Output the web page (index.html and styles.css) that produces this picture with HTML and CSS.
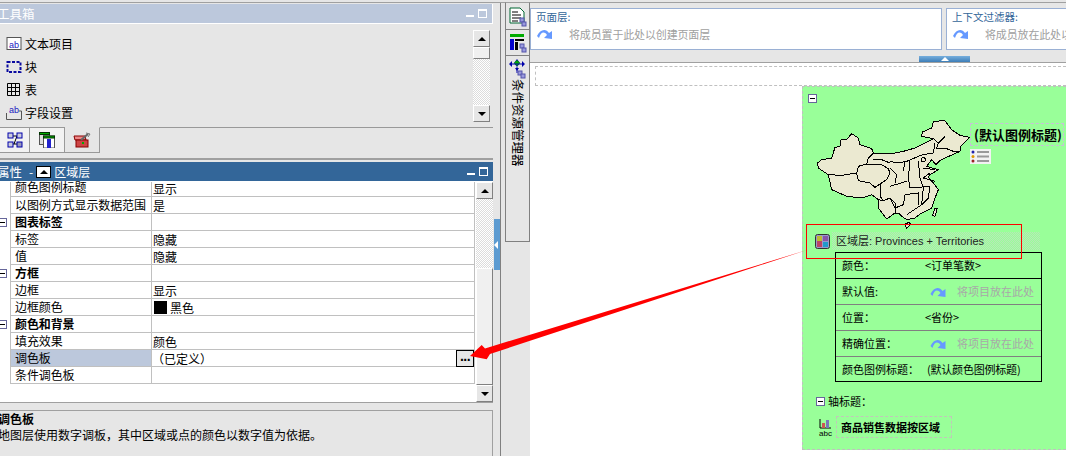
FILE: index.html
```html
<!DOCTYPE html>
<html lang="zh-CN">
<head>
  <meta charset="UTF-8" />
  <title>地图属性</title>
  <link rel="stylesheet" href="styles.css">
</head>
<body>
  <div class="app">

    <div class="left-col">
      <div class="title-bar light">
        <span class="title-text">工具箱</span>
        <span class="win-btns"><i class="btn-min"></i><i class="btn-max"></i></span>
      </div>
      <div class="toolbox">
        <ul class="tool-list">
          <li><svg class="tool-icon" viewBox="0 0 16 16"><rect x="1" y="1.5" width="14" height="12" fill="#fff" stroke="#555"/><text x="8" y="11.5" class="icon-text">ab</text></svg>文本项目</li>
          <li><svg class="tool-icon" viewBox="0 0 16 16"><rect x="1.5" y="3" width="13" height="10" fill="none" stroke="#0a0aa0" stroke-width="2" stroke-dasharray="3 1.5"/></svg>块</li>
          <li><svg class="tool-icon" viewBox="0 0 16 16"><path d="M1.500 1.500h12v12h-12zM1.500 5.500h12M1.500 9.500h12M5.500 1.500v12M9.500 1.500v12" fill="none" stroke="#000"/></svg>表</li>
          <li><svg class="tool-icon" viewBox="0 0 16 16"><path d="M.5 8v6.500h15V6H13" fill="none" stroke="#555"/><text x="8" y="8" class="icon-text">ab</text></svg>字段设置</li>
        </ul>
        <div class="scrollbar tool-scroll">
          <span class="sb-btn"><i class="tri-up"></i></span>
          <span class="sb-thumb small"></span>
          <span class="sb-track"></span>
          <span class="sb-btn"><i class="tri-down"></i></span>
        </div>
      </div>
      <div class="tabs">
        <span class="tab">
          <svg viewBox="0 0 16 16" width="16" height="16"><path d="M5 4h5M5 12h5M10 4l-3 8" stroke="#000" fill="none"/><rect x="1" y="1" width="5" height="5" fill="#ccd" stroke="#00a"/><rect x="10" y="1" width="5" height="5" fill="#ccd" stroke="#00a"/><rect x="1" y="10" width="5" height="5" fill="#ccd" stroke="#00a"/><rect x="10" y="10" width="5" height="5" fill="#99b" stroke="#00a"/></svg>
        </span>
        <span class="tab">
          <svg viewBox="0 0 16 16" width="16" height="16"><rect x=".5" y=".5" width="10" height="12" fill="#ddd" stroke="#555"/><rect x=".5" y=".5" width="10" height="2" fill="#0a0" stroke="#030"/><rect x="4.500" y="4" width="11" height="12" fill="#fff" stroke="#555"/><rect x="4.500" y="4" width="11" height="2" fill="#0a0" stroke="#030"/><rect x="8" y="7" width="4" height="9" fill="#22c"/></svg>
        </span>
        <span class="tab current">
          <svg viewBox="0 0 18 16" width="18" height="16"><path d="M1 4h11l1 4H2z" fill="#e88" stroke="#800"/><rect x="3" y="8" width="12" height="7" fill="#c44" stroke="#800"/><rect x="9" y="10" width="2" height="2" fill="#0a0"/><path d="M8 8l7-6" stroke="#666" stroke-width="2"/><path d="M13 1l4 1-2 3" fill="none" stroke="#777"/></svg>
        </span>
      </div>
      <div class="title-bar dark">
        <span class="title-text">属性</span>
        <span class="crumb-dash">-</span>
        <span class="crumb-icon"><i class="tri-up"></i></span>
        <span class="crumb-name">区域层</span>
        <span class="win-btns"><i class="btn-min"></i><i class="btn-max"></i></span>
      </div>
      <div class="props">
        <div class="prop-table">
          <div class="prop-row first"><span class="key">颜色图例标题</span><span class="val">显示</span></div>
          <div class="prop-row"><span class="key">以图例方式显示数据范围</span><span class="val">是</span></div>
          <div class="prop-row group"><i class="fold"></i><span class="key">图表标签</span><span class="val"></span></div>
          <div class="prop-row"><span class="key">标签</span><span class="val">隐藏</span></div>
          <div class="prop-row"><span class="key">值</span><span class="val">隐藏</span></div>
          <div class="prop-row group"><i class="fold"></i><span class="key">方框</span><span class="val"></span></div>
          <div class="prop-row"><span class="key">边框</span><span class="val">显示</span></div>
          <div class="prop-row"><span class="key">边框颜色</span><span class="val"><i class="swatch"></i>黑色</span></div>
          <div class="prop-row group"><i class="fold"></i><span class="key">颜色和背景</span><span class="val"></span></div>
          <div class="prop-row"><span class="key">填充效果</span><span class="val">颜色</span></div>
          <div class="prop-row selected"><span class="key">调色板</span><span class="val defined">（已定义）<b class="more">...</b></span></div>
          <div class="prop-row"><span class="key">条件调色板</span><span class="val"></span></div>
        </div>
        <div class="scrollbar prop-scroll">
          <span class="sb-btn"><i class="tri-up"></i></span>
          <span class="sb-track"></span>
          <span class="sb-thumb"></span>
          <span class="sb-btn"><i class="tri-down"></i></span>
        </div>
      </div>
      <div class="help">
        <strong>调色板</strong>
        <p>地图层使用数字调板，其中区域或点的颜色以数字值为依据。</p>
      </div>
    </div>

    <div class="splitter"><span class="split-handle"><i class="tri-left"></i></span></div>

    <div class="strip">
      <span class="strip-tab">
        <svg viewBox="0 0 18 20" width="18" height="20"><path d="M1 1h10l4 4v11H1z" fill="#fff" stroke="#063"/><path d="M3 5h6M3 8h9M3 11h9M3 14h6" stroke="#000"/><rect x="11" y="11" width="4" height="4" fill="#99d" stroke="#55a"/><rect x="13" y="15" width="4" height="4" fill="#99d" stroke="#55a"/></svg>
      </span>
      <span class="strip-tab">
        <svg viewBox="0 0 18 20" width="18" height="20"><rect x="1" y="1" width="14" height="3" fill="#0a0"/><rect x="1" y="6" width="4" height="11" fill="#00c"/><rect x="6" y="6" width="9" height="2" fill="#000"/><rect x="6" y="9" width="3" height="8" fill="#000"/><rect x="11" y="11" width="4" height="4" fill="#99d" stroke="#55a"/><rect x="13" y="15" width="4" height="4" fill="#99d" stroke="#55a"/></svg>
      </span>
      <span class="strip-tab long">
        <svg viewBox="0 0 18 20" width="18" height="20"><path d="M0 5l3-3v6zM16 5l-3-3v6zM8 12l-2-3h4zM8 0l3 4-3 4-3-4z" fill="#00a"/><path d="M5 4l3-3 3 3-3 3z" fill="#0a0"/><path d="M3 5h10M8 8v6" stroke="#00a"/><rect x="9" y="12" width="4" height="4" fill="#99d" stroke="#55a"/><rect x="12" y="15" width="4" height="4" fill="#99d" stroke="#55a"/></svg>
        <span class="strip-label">条件资源管理器</span>
      </span>
    </div>

    <div class="main">
      <div class="drop-row">
        <div class="drop-zone page-zone">
          <span class="zone-label">页面层:</span>
          <div class="zone-hint"><svg class="hint-arrow" viewBox="0 0 16 12"><path d="M0 8C3 1 9 0 12 5l3-2v8L7 10l3-3C7 3 4 4 2 10z" fill="#6699ff"/></svg>将成员置于此处以创建页面层</div>
        </div>
        <div class="drop-zone filter-zone">
          <span class="zone-label">上下文过滤器:</span>
          <div class="zone-hint"><svg class="hint-arrow" viewBox="0 0 16 12"><path d="M0 8C3 1 9 0 12 5l3-2v8L7 10l3-3C7 3 4 4 2 10z" fill="#6699ff"/></svg>将成员放在此处以创建上下文过滤器</div>
        </div>
      </div>
      <div class="collapse-row"><span class="collapse-btn"><i class="tri-up white"></i></span></div>
      <div class="canvas">
        <div class="dashed-strip"></div>
        <div class="map-area">
          <div class="map-panel">
            <i class="fold panel-fold"></i>
            <div class="map-row">
              <svg class="china" viewBox="0 0 465 336">
                <path class="land" d="M8 135L20 125 50 120 60 88 75 85 78 65 95 65 110 47 130 60 135 80 170 92 175 105 205 105 225 108 265 100 300 90 330 75 355 62 320 55 322 42 350 30 355 10 390 8 410 35 435 52 463 58 450 72 437 85 435 100 390 120 375 128 363 140 350 125 335 145 350 150 370 155 345 170 340 178 355 195 370 215 360 240 350 270 320 285 300 300 275 305 260 295 250 285 240 285 215 303 190 270 190 245 170 230 140 240 95 235 50 215 40 170 10 150Z"/>
                <path class="land" d="M270 318l13-5 4 7-12 11zM360 270h7l-7 25-7-3z"/>
                <path class="line" d="M40 170L80 172 125 165 130 145 155 138 200 140 220 152 225 165 215 185 195 198 180 208 165 195 130 188 125 165M155 138L160 120 175 105M175 125L200 125 225 135M195 198L195 235 205 248 225 240 240 255 240 285M190 245L205 248"/>
                <path class="line" d="M355 62L370 75 365 90 390 90 415 100 435 100M390 55L370 75M225 130L250 135 275 130 310 115 325 110 355 105 360 75M285 130L280 180 285 210M310 130L315 180 325 210 320 260M325 180L360 190M265 160L270 130M225 150L245 170 240 195M225 205L275 190M285 210L345 205M270 230L310 225 310 260M270 230L265 260 240 270 225 240M345 205L340 240 320 260 275 290M325 150L360 155M325 180L345 165"/>
                <circle class="line" cx="325" cy="125" r="6"/>
              </svg>
              <div class="legend-side">
                <span class="legend-title">(默认图例标题)</span>
                <span class="legend-icon"><svg viewBox="0 0 21 15" width="21" height="15"><circle cx="3" cy="3" r="1.500" fill="#22a"/><circle cx="3" cy="7.500" r="1.500" fill="#d90"/><circle cx="3" cy="12" r="1.500" fill="#922"/><path d="M7 3h12M7 7.500h12M7 12h12" stroke="#999" stroke-width="2"/></svg></span>
              </div>
            </div>
            <div class="layer-row">
              <svg class="layer-icon" viewBox="0 0 15 15"><rect x=".5" y=".5" width="14" height="14" rx="2" fill="#99c" stroke="#333"/><path d="M2 2h5v5H2z" fill="#bb3"/><path d="M2 7h5v6H2z" fill="#b46"/><path d="M8 8h5v5H8z" fill="#29c"/><path d="M8 2h5v5H8z" fill="#85a"/></svg>
              <span class="layer-name">区域层: Provinces + Territories</span>
            </div>
            <div class="layer-table">
              <div class="layer-line"><span class="l-key">颜色：</span><span class="l-val">&lt;订单笔数&gt;</span></div>
              <div class="layer-line"><span class="l-key">默认值:</span><span class="l-drop"><svg class="hint-arrow" viewBox="0 0 16 12"><path d="M0 8C3 1 9 0 12 5l3-2v8L7 10l3-3C7 3 4 4 2 10z" fill="#6699ff"/></svg>将项目放在此处</span></div>
              <div class="layer-line"><span class="l-key">位置：</span><span class="l-val">&lt;省份&gt;</span></div>
              <div class="layer-line"><span class="l-key">精确位置：</span><span class="l-drop"><svg class="hint-arrow" viewBox="0 0 16 12"><path d="M0 8C3 1 9 0 12 5l3-2v8L7 10l3-3C7 3 4 4 2 10z" fill="#6699ff"/></svg>将项目放在此处</span></div>
              <div class="layer-line"><span class="l-key">颜色图例标题：</span><span class="l-val tight">(默认颜色图例标题)</span></div>
            </div>
            <div class="axis-row"><i class="fold axis-fold"></i>轴标题：</div>
            <div class="title-row">
              <svg class="abc-icon" viewBox="0 0 15 19"><path d="M2 1v9h11" fill="none" stroke="#000"/><rect x="4" y="5" width="3" height="5" fill="#c55"/><rect x="8" y="2" width="3" height="8" fill="#77b"/><text x="7.500" y="18" class="abc-text">abc</text></svg>
              <span class="chart-title">商品销售数据按区域</span>
            </div>
          </div>
        </div>
      </div>
    </div>

    <div class="callout-box"></div>
    <svg class="callout-arrow" viewBox="0 0 1066 456"><polygon points="470,356 481.700,345 485,348.500 807,250 490,354 486.700,359.300" fill="#f00"/></svg>
  </div>
</body>
</html>
```

FILE: styles.css
```css
* {
  box-sizing: border-box;
}

body {
  margin: 0;
  font-family: "Noto Sans CJK SC", "Liberation Sans", sans-serif;
  font-size: 12px;
  line-height: 17px;
  color: #000;
  background: #e6e6e6;
}

i {
  display: block;
}

ul, p {
  margin: 0;
  padding: 0;
}

.app {
  position: relative;
  display: flex;
  width: 1066px;
  height: 456px;
  overflow: hidden;
  padding-top: 2px;
  background: #e6e6e6;
}

/* left column */
.left-col {
  width: 493px;
  flex-shrink: 0;
  border-top: 1px solid #a0a0a0;
  display: flex;
  flex-direction: column;
}

.title-bar {
  display: flex;
  align-items: center;
  height: 20px;
  margin-top: 1px;
  color: #fff;
  border-right: 1px solid #fff;
  border-bottom: 1px solid #fff;
  overflow: hidden;
}

.title-bar.light { background: #bcc8dc; }

.title-bar.dark {
  background: #336699;
  border-bottom: 0;
  border-right: 0;
  height: 20px;
}

.title-text {
  margin-left: -3px;
  font-size: 12.500px;
}

.crumb-dash { margin-left: 7px; }

.crumb-icon {
  width: 15px;
  height: 12px;
  margin-left: 3px;
  background: #fff;
  border: 1px solid #000;
  display: flex;
  align-items: center;
  justify-content: center;
}

.crumb-name { margin-left: 3px; }

.win-btns {
  margin-left: auto;
  display: flex;
  align-items: flex-end;
  gap: 4px;
  padding-right: 5px;
}

.btn-min {
  width: 8px;
  height: 2px;
  background: #fff;
  margin-bottom: 1px;
}

.btn-max {
  width: 9px;
  height: 9px;
  border: 1px solid #fff;
  border-top-width: 2px;
}

.toolbox {
  height: 103px;
  display: flex;
  padding: 6px 3px 5px 6px;
}

.tool-list {
  list-style: none;
  flex: 1;
  padding-top: 2px;
}

.tool-list li {
  display: flex;
  align-items: center;
  gap: 3px;
  height: 23px;
  font-size: 12px;
}

.tool-icon {
  width: 16px;
  height: 16px;
}

.icon-text {
  font: 9px "Liberation Sans", sans-serif;
  fill: #2020c0;
  text-anchor: middle;
}

.tabs {
  display: flex;
  height: 26px;
  border-top: 1px solid #999;
  margin-bottom: 5px;
}

.tab {
  width: 35px;
  height: 26px;
  margin-top: -1px;
  background: #f2f2f2;
  border-right: 1px solid #999;
  border-bottom: 1px solid #999;
  border-top: 1px solid #999;
  display: flex;
  align-items: center;
  justify-content: center;
}

.tab:first-child { width: 30px; }

.tab.current {
  background: #e6e6e6;
  border-top-color: #e6e6e6;
}

.props {
  position: relative;
  display: flex;
  height: 222px;
  margin-top: 0;
  background: #fff;
  border-bottom: 1px solid #a0a0a0;
  overflow: hidden;
}

.tabs + .title-bar {
  border-top: 2px solid #e6e6e6;
  box-shadow: 0 -2px 0 #a0a0a0;
  height: 21px;
  margin-top: 2px;
}

.prop-table {
  width: 465px;
  margin-left: 10px;
  border-left: 1px solid #c0c0c0;
  flex-shrink: 0;
  height: 202px;
  border-right: 1px solid #c0c0c0;
  margin-top: 1px;
}

.prop-row {
  position: relative;
  display: flex;
  height: 17px;
  border-bottom: 1px solid #c0c0c0;
  line-height: 15px;
  white-space: nowrap;
}

.prop-row.first {
  height: 15px;
  line-height: 10px;
}

.key {
  width: 141px;
  padding-left: 4px;
  border-right: 1px solid #c0c0c0;
  flex-shrink: 0;
  letter-spacing: -.1px;
}

.val {
  flex: 1;
  position: relative;
  padding-left: 1px;
  display: flex;
  align-items: center;
}

.group .key { font-weight: bold; }

.selected .key { background: #bcc8dc; }

.defined { padding-left: 0; }

.swatch {
  width: 13px;
  height: 13px;
  background: #000;
  margin: 0 3px 0 1px;
}

.more {
  position: absolute;
  right: 0;
  top: 0;
  width: 18px;
  height: 17px;
  line-height: 11px;
  text-align: center;
  border: 1px solid #000;
  background: #e6e6e6;
  font-family: "Liberation Sans", sans-serif;
  font-size: 14px;
  letter-spacing: -.5px;
}

.fold {
  width: 9px;
  height: 9px;
  background: linear-gradient(#000, #000) center / 5px 1px no-repeat, #fff;
  border: 1px solid #66669a;
}

.prop-row > .fold {
  position: absolute;
  left: -13px;
  top: 4px;
}

.scrollbar {
  display: flex;
  flex-direction: column;
  width: 17px;
  flex-shrink: 0;
}

.prop-scroll {
  margin-left: 1px;
  margin-top: 1px;
}

.sb-btn {
  height: 17px;
  background: #e6e6e6;
  border: 1px solid;
  border-color: #fff #808080 #808080 #fff;
  display: flex;
  align-items: center;
  justify-content: center;
  flex-shrink: 0;
}

.sb-track {
  flex: 1;
  background: repeating-conic-gradient(#fff 0 25%, #dcdcdc 0 50%) 0 0 / 2px 2px;
}

.sb-thumb {
  height: 117px;
  background: #f0f0f0;
  border: 1px solid;
  border-color: #fff #808080 #808080 #fff;
  flex-shrink: 0;
}

.sb-thumb.small { height: 12px; }

.tri-up, .tri-down, .tri-left {
  width: 0;
  height: 0;
  border: 4px solid transparent;
}

.tri-up {
  border-top: 0;
  border-bottom-color: #000;
}

.tri-up.white { border-bottom-color: #fff; }

.tri-down {
  border-bottom: 0;
  border-top-color: #000;
}

.tri-left {
  border-left: 0;
  border-right-color: #fff;
}

.help {
  flex: 1;
  margin-top: 7px;
  border-top: 1px solid #a0a0a0;
  border-right: 1px solid #a0a0a0;
  line-height: 16px;
}

.help strong, .help p {
  display: block;
  margin-left: -2px;
}

/* splitter and side strip */
.splitter {
  position: relative;
  width: 12px;
  flex-shrink: 0;
  margin-top: 0;
  background: linear-gradient(#808080, #808080) 7px 0 / 1px 100% no-repeat;
  border-top: 1px solid #a0a0a0;
}

.split-handle {
  position: absolute;
  left: 1px;
  top: 216px;
  width: 6px;
  height: 51px;
  background: #5c9bd1;
  display: flex;
  align-items: center;
}

.split-handle .tri-left {
  border-width: 4px;
  border-left: 0;
}

.strip {
  width: 25px;
  flex-shrink: 0;
  height: 240px;
  border-top: 1px solid #a0a0a0;
  border-left: 1px solid #808080;
  border-right: 1px solid #808080;
  border-bottom: 1px solid #808080;
  display: flex;
  flex-direction: column;
}

.strip-tab {
  height: 26px;
  display: flex;
  flex-direction: column;
  align-items: center;
  padding-top: 3px;
  border-bottom: 1px solid #808080;
}

.strip-tab:first-child {
  height: 27px;
  padding-top: 4px;
}

.strip-tab.long {
  flex: 1;
  border-bottom: 0;
}

.strip-label {
  writing-mode: vertical-rl;
  text-orientation: sideways;
  margin-top: 0;
  font-size: 12.500px;
  line-height: 14px;
}

/* main area */
.main {
  flex: 1;
  min-width: 0;
  border-top: 1px solid #a0a0a0;
  display: flex;
  flex-direction: column;
}

.drop-row {
  display: flex;
  gap: 4px;
  padding-top: 5px;
  height: 47px;
  white-space: nowrap;
}

.drop-zone {
  background: #fff;
  border: 1px solid #9ab0d4;
  padding: 0 5px;
  overflow: hidden;
  height: 42px;
}

.page-zone {
  width: 412px;
  flex-shrink: 0;
}

.filter-zone {
  flex: 1;
  min-width: 0;
  margin-right: -60px;
}

.zone-label {
  display: block;
  color: #336699;
  font-size: 10.500px;
  line-height: 15px;
}

.zone-hint {
  display: flex;
  align-items: center;
  margin-top: 2px;
  color: #a0a0a0;
  font-size: 11px;
  line-height: 16px;
  letter-spacing: -.15px;
}

.hint-arrow {
  width: 18px;
  height: 12px;
  margin-right: 15px;
  flex-shrink: 0;
}

.collapse-row {
  height: 12px;
  display: flex;
  padding: 6px 0 0 389px;
}

.collapse-btn {
  width: 51px;
  height: 6px;
  background: linear-gradient(#76aedd, #3d7eb8);
  display: flex;
  justify-content: center;
  align-items: center;
}

.canvas {
  flex: 1;
  background: #fff;
  border-top: 1px solid #a0a0a0;
  padding-top: 3px;
  display: flex;
  flex-direction: column;
  min-height: 0;
}

.dashed-strip {
  height: 20px;
  margin-left: 5px;
  border: 1px dashed #c0c0c0;
  border-right: 0;
}

.map-area {
  padding-left: 272px;
}

.map-panel {
  height: 364px;
  background: #99ff99;
  border: 1px dashed #c0c0c0;
  border-right: 0;
  padding: 7px 0 0 4px;
}

.panel-fold { margin-left: 1px; }

.map-row {
  display: flex;
  margin-top: 15px;
  margin-left: 8px;
  height: 112px;
}

.china {
  width: 155px;
  height: 112px;
  flex-shrink: 0;
  shape-rendering: crispEdges;
}

.land {
  fill: #ebe9d1;
  stroke: #000;
  stroke-width: 3;
  stroke-linejoin: round;
}

.line {
  fill: none;
  stroke: #000;
  stroke-width: 3;
}

.legend-side {
  margin-top: 5px;
  display: flex;
  flex-direction: column;
  gap: 3px;
  align-items: flex-start;
}

.legend-title {
  height: 23px;
  width: 94px;
  padding-left: 3px;
  border: 1px dashed #c8c0d8;
  font-size: 13px;
  font-weight: bold;
  line-height: 21px;
  white-space: nowrap;
}

.legend-icon {
  width: 21px;
  height: 15px;
  background: #f2f2f2;
  display: block;
}

.layer-row {
  display: flex;
  align-items: center;
  height: 18px;
  margin-top: 2px;
  margin-left: 8px;
  font-size: 11px;
  color: #222;
}

.layer-icon {
  width: 15px;
  height: 15px;
  flex-shrink: 0;
}

.layer-name {
  width: 208px;
  height: 18px;
  margin-left: 2px;
  padding-left: 4px;
  line-height: 18px;
  font-family: "Liberation Sans", "Noto Sans CJK SC", sans-serif;
  background: repeating-conic-gradient(#99ff99 0 25%, #b8e6b8 0 50%) 0 0 / 2px 2px;
}

.layer-table {
  width: 207px;
  margin: 2px 0 0 28px;
  border: 1px solid #000;
  font-size: 11px;
}

.layer-line {
  display: flex;
  align-items: center;
  height: 26px;
  padding-left: 6px;
  border-bottom: 1px solid #808080;
}

.layer-line:last-child {
  border-bottom: 0;
  height: 24px;
}

.layer-line:first-child {
  border-bottom-color: #000;
}

.l-key {
  width: 83px;
  flex-shrink: 0;
  white-space: nowrap;
}

.l-val { white-space: nowrap; }

.l-val.tight {
  margin-left: 2px;
  letter-spacing: -.2px;
}

.l-drop {
  display: flex;
  align-items: center;
  margin-left: 5px;
  color: #a8a8a8;
  white-space: nowrap;
  letter-spacing: 0;
}

.l-drop .hint-arrow {
  width: 17px;
  margin-right: 10px;
}

.axis-row {
  display: flex;
  align-items: center;
  gap: 3px;
  margin: 11px 0 0 9px;
  font-size: 11px;
}

.title-row {
  display: flex;
  align-items: center;
  gap: 3px;
  margin: 6px 0 0 11px;
}

.abc-icon {
  width: 15px;
  height: 19px;
  flex-shrink: 0;
}

.abc-text {
  font: 8px "Liberation Sans", sans-serif;
  text-anchor: middle;
}

.chart-title {
  width: 116px;
  height: 22px;
  padding-left: 4px;
  border: 1px dashed #c0c8b8;
  font-size: 11px;
  font-weight: bold;
  line-height: 20px;
  white-space: nowrap;
}

/* red annotation over the screenshot */
.callout-box {
  position: absolute;
  left: 806px;
  top: 224px;
  width: 216px;
  height: 35px;
  border: 1px solid #f00;
}

.callout-arrow {
  position: absolute;
  left: 0;
  top: 0;
  width: 1066px;
  height: 456px;
  pointer-events: none;
}
```
